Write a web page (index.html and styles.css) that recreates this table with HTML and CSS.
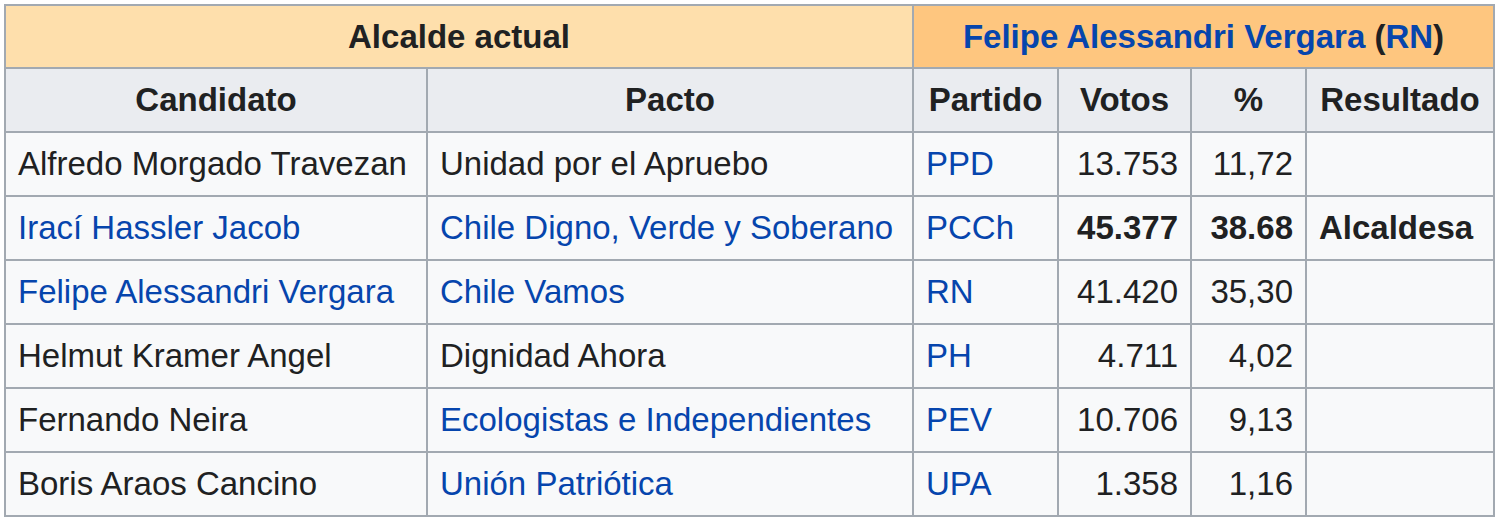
FILE: index.html
```html
<!DOCTYPE html>
<html lang="es">
<head>
<meta charset="utf-8">
<link rel="stylesheet" href="styles.css">
</head>
<body>
<table class="results">
  <colgroup>
    <col class="c-cand"><col class="c-pacto"><col class="c-part"><col class="c-votos"><col class="c-pct"><col class="c-res">
  </colgroup>
  <thead>
    <tr class="top">
      <th colspan="2" class="current-label">Alcalde actual</th>
      <th colspan="4" class="current-name"><a href="#">Felipe Alessandri Vergara</a> (<a href="#">RN</a>)</th>
    </tr>
    <tr class="heads">
      <th>Candidato</th><th>Pacto</th><th>Partido</th><th>Votos</th><th>%</th><th>Resultado</th>
    </tr>
  </thead>
  <tbody>
    <tr><td>Alfredo Morgado Travezan</td><td>Unidad por el Apruebo</td><td><a href="#">PPD</a></td><td class="num">13.753</td><td class="num">11,72</td><td></td></tr>
    <tr><td><a href="#">Irací Hassler Jacob</a></td><td><a href="#">Chile Digno, Verde y Soberano</a></td><td><a href="#">PCCh</a></td><td class="num b">45.377</td><td class="num b">38.68</td><td class="b">Alcaldesa</td></tr>
    <tr><td><a href="#">Felipe Alessandri Vergara</a></td><td><a href="#">Chile Vamos</a></td><td><a href="#">RN</a></td><td class="num">41.420</td><td class="num">35,30</td><td></td></tr>
    <tr><td>Helmut Kramer Angel</td><td>Dignidad Ahora</td><td><a href="#">PH</a></td><td class="num">4.711</td><td class="num">4,02</td><td></td></tr>
    <tr><td>Fernando Neira</td><td><a href="#">Ecologistas e Independientes</a></td><td><a href="#">PEV</a></td><td class="num">10.706</td><td class="num">9,13</td><td></td></tr>
    <tr><td>Boris Araos Cancino</td><td><a href="#">Unión Patriótica</a></td><td><a href="#">UPA</a></td><td class="num">1.358</td><td class="num">1,16</td><td></td></tr>
  </tbody>
</table>
</body>
</html>
```
FILE: styles.css
```css
html, body {
  margin: 0;
  padding: 0;
  background: #ffffff;
}
body {
  padding: 4px;
  font-family: "Liberation Sans", Arial, sans-serif;
  color: #202122;
}
.results {
  border-collapse: collapse;
  table-layout: fixed;
  width: 1489px;
  background: #f8f9fa;
  border: 2px solid #a2a9b1;
  font-size: 33px;
}
.c-cand { width: 422px; }
.c-pacto { width: 486px; }
.c-part { width: 145px; }
.c-votos { width: 133px; }
.c-pct { width: 115px; }
.c-res { width: 188px; }
.results th,
.results td {
  border: 2px solid #a2a9b1;
  padding: 0 12px;
  height: 64px;
  box-sizing: border-box;
  white-space: nowrap;
  text-align: left;
}
.results th {
  background: #eaecf0;
  text-align: center;
  font-weight: bold;
}
.results tr.top th { height: 63px; }
.results th.current-label { background: #fedfac; }
.results th.current-name { background: #fec67f; }
.results a {
  color: #0645ad;
  text-decoration: none;
}
.results td.num { text-align: right; }
.results .b { font-weight: bold; }
```
